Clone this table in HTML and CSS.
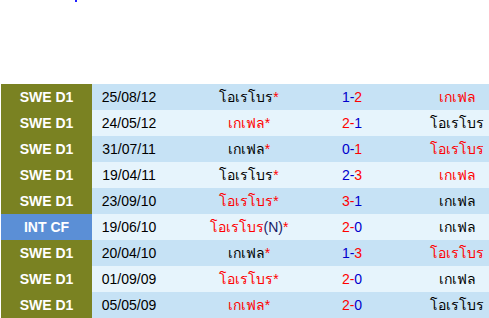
FILE: index.html
```html
<!DOCTYPE html>
<html lang="th">
<head>
<meta charset="utf-8">
<link rel="stylesheet" href="styles.css">
</head>
<body>
<div class="top"><span class="dot"></span></div>
<div class="wrap">
<table class="results">
<tr class="dark"><td class="lg">SWE D1</td><td class="dt">25/08/12</td><td class="home">โอเรโบร<span class="st">*</span></td><td class="sc"><span class="b">1-</span><span class="r">2</span></td><td class="away r">เกเฟล</td></tr>
<tr class="light"><td class="lg">SWE D1</td><td class="dt">24/05/12</td><td class="home r">เกเฟล<span class="st">*</span></td><td class="sc"><span class="r">2-</span><span class="b">1</span></td><td class="away">โอเรโบร</td></tr>
<tr class="dark"><td class="lg">SWE D1</td><td class="dt">31/07/11</td><td class="home">เกเฟล<span class="st">*</span></td><td class="sc"><span class="b">0-</span><span class="r">1</span></td><td class="away r">โอเรโบร</td></tr>
<tr class="light"><td class="lg">SWE D1</td><td class="dt">19/04/11</td><td class="home">โอเรโบร<span class="st">*</span></td><td class="sc"><span class="b">2-</span><span class="r">3</span></td><td class="away r">เกเฟล</td></tr>
<tr class="dark"><td class="lg">SWE D1</td><td class="dt">23/09/10</td><td class="home r">โอเรโบร<span class="st">*</span></td><td class="sc"><span class="r">3-</span><span class="b">1</span></td><td class="away">เกเฟล</td></tr>
<tr class="light"><td class="lg int">INT CF</td><td class="dt">19/06/10</td><td class="home r">โอเรโบร<span class="n">(N)</span><span class="st">*</span></td><td class="sc"><span class="r">2-</span><span class="b">0</span></td><td class="away">เกเฟล</td></tr>
<tr class="dark"><td class="lg">SWE D1</td><td class="dt">20/04/10</td><td class="home">เกเฟล<span class="st">*</span></td><td class="sc"><span class="b">1-</span><span class="r">3</span></td><td class="away r">โอเรโบร</td></tr>
<tr class="light"><td class="lg">SWE D1</td><td class="dt">01/09/09</td><td class="home r">โอเรโบร<span class="st">*</span></td><td class="sc"><span class="r">2-</span><span class="b">0</span></td><td class="away">เกเฟล</td></tr>
<tr class="dark"><td class="lg">SWE D1</td><td class="dt">05/05/09</td><td class="home r">เกเฟล<span class="st">*</span></td><td class="sc"><span class="r">2-</span><span class="b">0</span></td><td class="away">โอเรโบร</td></tr>
</table>
</div>
</body>
</html>
```
FILE: styles.css
```css
html, body {
  margin: 0;
  padding: 0;
  background: #ffffff;
  overflow: hidden;
}
body {
  font-family: "Liberation Sans", Arial, "Noto Sans", sans-serif;
  font-size: 14px;
  color: #000;
}
.top {
  height: 84px;
  padding-left: 75px;
}
.dot {
  display: block;
  width: 2px;
  height: 2px;
  background: #2020ff;
}
.wrap {
  padding-left: 1px;
}
.results {
  border-collapse: collapse;
  border-spacing: 0;
  table-layout: fixed;
  width: 488px;
}
.results td {
  height: 26px;
  padding: 0;
  text-align: center;
  vertical-align: middle;
  white-space: nowrap;
}
.dark td { background: #c6e2f5; }
.light td { background: #e6f4fc; }
.results td.lg {
  width: 91px;
  background: #7a8222;
  color: #ffffff;
  font-weight: bold;
}
.results td.int { background: #5b8fd6; }
.dt { width: 74px; }
.home { width: 166px; }
.sc { width: 40px; }
.results td.away {
  width: 64px;
  padding-left: 53px;
}
.r { color: #ff0000; }
.b { color: #0000cc; }
.st { color: #ff0000; }
.n { color: #1a1a66; }
```
